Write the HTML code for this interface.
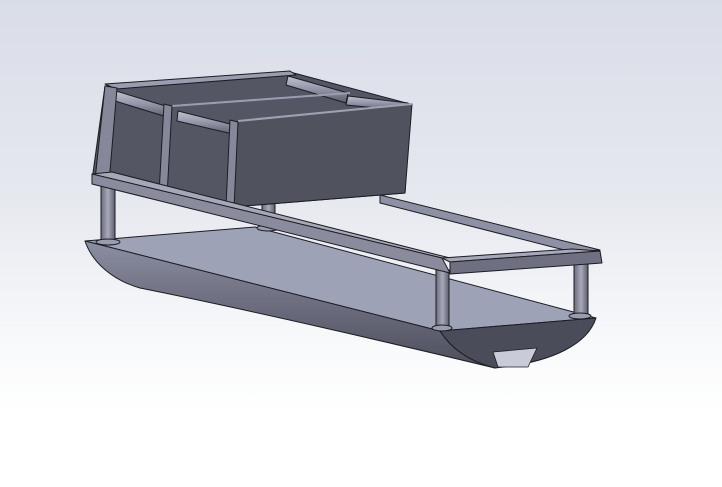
<!DOCTYPE html>
<html><head><style>
html,body{margin:0;padding:0;width:722px;height:487px;overflow:hidden;}
body{background:linear-gradient(to bottom,#d9dde8 0%,#e6e8ef 40%,#f8f9fb 70%,#ffffff 85%,#ffffff 100%);}
svg{position:absolute;left:0;top:0}
</style></head><body>
<svg width="722" height="487" viewBox="0 0 722 487" stroke="#1c1c22" stroke-width="1" stroke-linejoin="round">
<defs>
<linearGradient id="side" x1="0" y1="0" x2="0" y2="1">
<stop offset="0" stop-color="#8c8ea2"/><stop offset="1" stop-color="#4c4e5c"/></linearGradient>
<linearGradient id="leg" x1="0" y1="0" x2="1" y2="0">
<stop offset="0" stop-color="#6a6c7c"/><stop offset="0.5" stop-color="#a8aabb"/><stop offset="1" stop-color="#5c5e6e"/></linearGradient>
<linearGradient id="tube" x1="0" y1="0" x2="0" y2="1">
<stop offset="0" stop-color="#c0c2d0"/><stop offset="0.5" stop-color="#9294a6"/><stop offset="1" stop-color="#5a5c6a"/></linearGradient>
</defs>
<polygon points="85,241 255,227 596,318 440,331" fill="#9ea2b6"/>
<path d="M85,241 L440,331 C452,350 472,362 495,368 C400,345 250,310 140,288 C112,280 92,262 85,241 Z" fill="url(#side)"/>
<path d="M440,331 L596,318 C588,343 555,362 495,368 C472,362 452,350 440,331 Z" fill="#4a4c5a"/>
<polygon points="493,352 537,348 528,367 498,367" fill="#c9ccd8" stroke-width="0.8"/>
<rect x="101" y="186" width="14" height="56" fill="url(#leg)"/>
<ellipse cx="108" cy="242" rx="12" ry="3" fill="#9a9cb0"/>
<rect x="262" y="200" width="13" height="28" fill="url(#leg)"/>
<ellipse cx="268" cy="228" rx="11" ry="3" fill="#9a9cb0"/>
<rect x="436" y="270" width="13" height="58" fill="url(#leg)"/>
<ellipse cx="442" cy="328" rx="10" ry="3" fill="#9a9cb0"/>
<rect x="574" y="262" width="14" height="54" fill="url(#leg)"/>
<ellipse cx="580" cy="316" rx="11" ry="3" fill="#9a9cb0"/>
<polygon points="380,195 600,250 572,252 380,203" fill="#8e90a4"/>
<polygon points="105,86 290,72 410,104 405,193 232,207 92,180" fill="#545664"/>
<polygon points="105,84 290,71 296,75 116,89" fill="#9a9cb0"/>
<polygon points="116,91 172,108 170,118 115,101" fill="url(#tube)"/>
<polygon points="178,111 238,126 237,135 177,121" fill="url(#tube)"/>
<polygon points="288,76 348,93 346,103 286,85" fill="url(#tube)"/>
<polygon points="348,96 408,103 408,111 346,105" fill="url(#tube)"/>
<line x1="172" y1="106" x2="350" y2="93" stroke="#9a9cb0" stroke-width="2"/>
<polygon points="238,121 412,104 405,193 232,207" fill="#50525e"/>
<line x1="238" y1="121" x2="412" y2="104" stroke="#a0a2b4" stroke-width="2"/>
<polygon points="105,86 117,88 109,183 95,180" fill="#868899"/>
<polygon points="164,104 172,106 167,196 159,194" fill="#868899"/>
<polygon points="230,120 238,122 234,208 226,206" fill="#868899"/>
<polygon points="92,174 112,172 450,258 442,258" fill="#a6a8ba"/>
<polygon points="92,174 442,258 450,273 92,184" fill="#8a8c9e"/>
<polygon points="442,258 572,249 600,251 450,262" fill="#a6a8ba"/>
<polygon points="450,262 600,251 602,263 450,274" fill="#6e7082"/>
</svg>
</body></html>
